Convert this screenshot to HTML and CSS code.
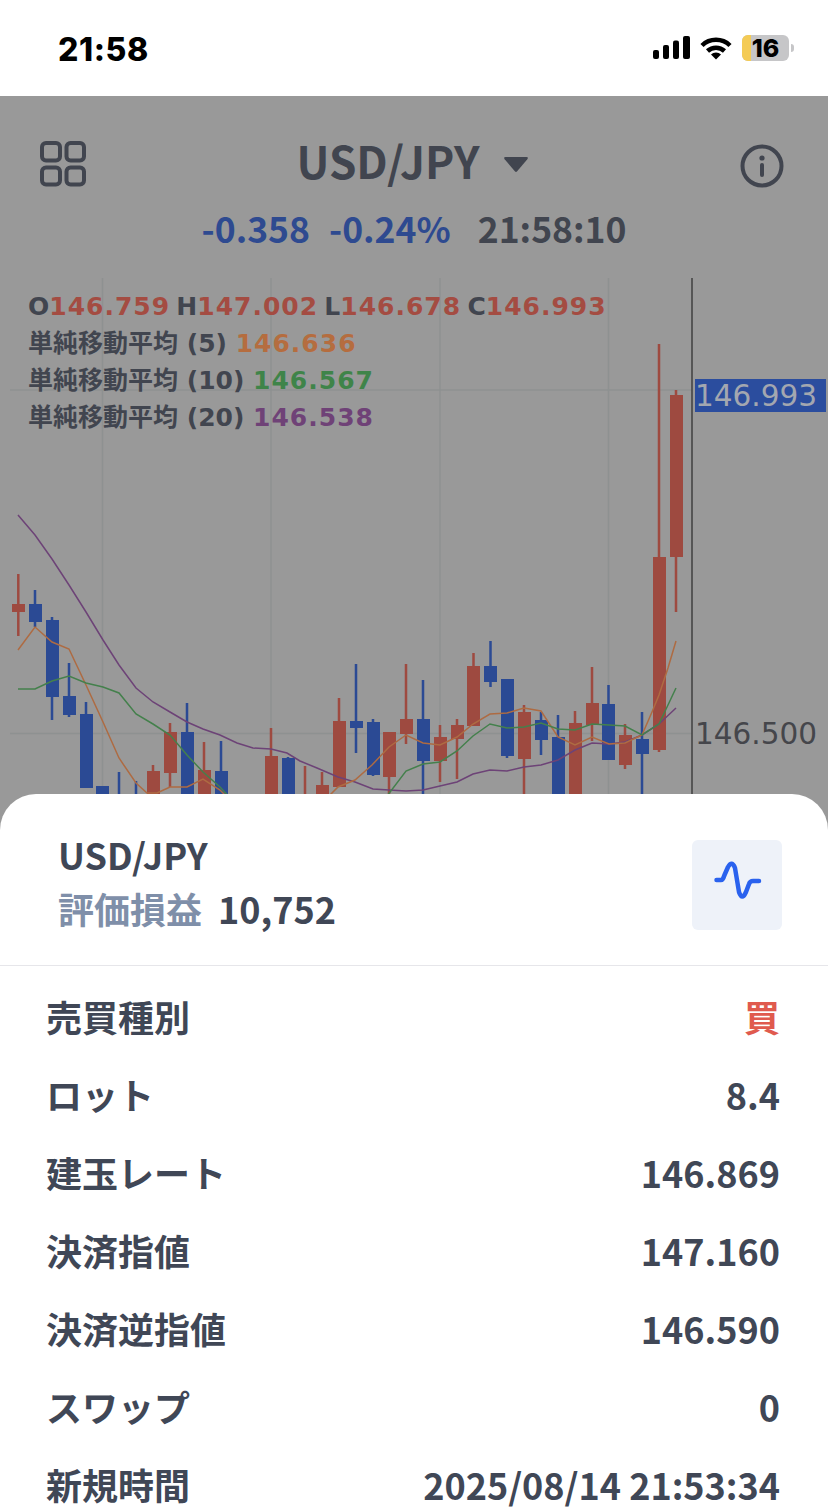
FILE: index.html
```html
<!DOCTYPE html>
<html lang="ja">

<head>
    <meta charset="UTF-8">
    <meta name="viewport" content="width=device-width, initial-scale=1.0">
    <title>USD/JPY</title>
    <link rel="stylesheet" href="styles.css">
</head>

<body>
    <div class="screen">
        <div class="status-bar">
            <span class="clock">21:58</span>
            <div class="status-icons">
                <svg class="signal" width="38" height="24" viewBox="0 0 38 24">
                    <rect x="0" y="14" width="6" height="9" rx="2" />
                    <rect x="10" y="9" width="6" height="14" rx="2" />
                    <rect x="20" y="4.500" width="6" height="18.500" rx="2" />
                    <rect x="30" y="0" width="7" height="23" rx="2" />
                </svg>
                <svg class="wifi" width="32" height="24" viewBox="0 0 32 24">
                    <path d="M2 9.500 A20 20 0 0 1 30 9.500" />
                    <path d="M7.500 15 A12.500 12.500 0 0 1 24.500 15" />
                    <path class="wifi-dot" d="M11 18.500 A7 7 0 0 1 21 18.500 L16 23.500 Z" />
                </svg>
                <div class="battery">
                    <div class="battery-fill"></div>
                    <span class="battery-level">16</span>
                </div>
                <div class="battery-nub"></div>
            </div>
        </div>

        <div class="main">
            <div class="toolbar">
                <svg class="grid-icon" width="48" height="48" viewBox="0 0 48 48">
                    <rect x="3" y="3" width="18" height="17.500" rx="4" />
                    <rect x="27.500" y="3" width="17.500" height="17.500" rx="4" />
                    <rect x="3" y="27.500" width="18" height="17" rx="4" />
                    <rect x="27.500" y="27.500" width="17.500" height="17" rx="4" />
                </svg>
                <div class="pair-select">
                    <span class="pair-name">USD/JPY</span>
                    <svg width="28" height="17" viewBox="0 0 28 18">
                        <path d="M3 1 H25 Q27.500 1 26 3.500 L15 16.500 Q14 17.500 13 16.500 L2 3.500 Q0.500 1 3 1 Z" />
                    </svg>
                </div>
                <svg class="info-icon" width="44" height="44" viewBox="0 0 44 44">
                    <circle cx="22" cy="22" r="19.500" />
                    <circle class="info-dot" cx="22" cy="14" r="2.600" />
                    <path d="M22 21 V31" />
                </svg>
            </div>

            <div class="quote">
                <span class="quote-down">-0.358</span>
                <span class="quote-down">-0.24%</span>
                <span class="quote-time">21:58:10</span>
            </div>

            <div class="chart">
                <svg class="chart-svg" width="828" height="520" viewBox="0 278 828 520">
                    <!-- grid -->
                    <path class="grid-line" d="M102.500 278 V800 M271 278 V800 M440 278 V800 M608.500 278 V800 M10 390 H692 M10 733.500 H692" />
                    <path class="axis-line" d="M692 278 V800" />

                    <!-- red candles -->
                    <path class="wick-up" d="M18.300 574 V636 M153 765 V775 M170 723 V787 M204 742 V775 M271 728 V760 M305 766 V800 M322 772 V790 M339 698 V725 M389 770 V800 M406 664 V744 M440 725 V782 M457 719 V779 M473.500 653 V670 M524 705 V800 M575 711 V730 M592 667 V741 M625 724 V769 M659 344 V752 M676 390 V612" />
                    <path class="body-up" d="M12 604 h13 v8 h-13 z M147 771 h13 v30 h-13 z M164 732 h13 v41 h-13 z M198 770 h13 v30 h-13 z M265 756 h13 v45 h-13 z M316 785 h13 v16 h-13 z M333 721 h13 v66 h-13 z M383 732 h13 v45 h-13 z M400 719 h13 v15 h-13 z M434 737 h13 v24 h-13 z M451 725 h13 v14 h-13 z M467 666 h13 v60 h-13 z M518 712 h13 v47 h-13 z M569 723 h13 v78 h-13 z M586 703 h13 v22 h-13 z M619 735 h13 v30 h-13 z M653 557 h13 v193 h-13 z M670 395 h13 v162 h-13 z" />

                    <!-- blue candles -->
                    <path class="wick-down" d="M35 590 V627 M52 617 V720 M69 663 V717 M86 702 V720 M119 772 V800 M136 781 V800 M187 703 V740 M221 741 V775 M288 757 V765 M356 664 V753 M373 719 V776 M423 680 V800 M490.500 641 V687 M507 679 V758 M541 712 V755 M558 715 V745 M608.500 685 V710 M642 712 V800" />
                    <path class="body-down" d="M29 604 h13 v18 h-13 z M46 620 h13 v77 h-13 z M63 696 h13 v19 h-13 z M80 714 h13 v74 h-13 z M96 786 h13 v15 h-13 z M181 732 h13 v69 h-13 z M215 771 h13 v30 h-13 z M282 758 h13 v43 h-13 z M350 721 h13 v7 h-13 z M367 722 h13 v53 h-13 z M417 719 h13 v42 h-13 z M484 666 h13 v16 h-13 z M501 679 h13 v77 h-13 z M535 720 h13 v20 h-13 z M552 737 h13 v64 h-13 z M602 704 h13 v56 h-13 z M636 739 h13 v15 h-13 z" />

                    <!-- moving averages -->
                    <polyline class="ma-20" points="18,515 35,535 52,559 69,585 86,612 103,640 119,665 136,688 153,702 170,712 187,722 203,729 220,735 237,743 253,748 271,749 287,753 300,761 317,768 338,777 355,782 373,789 389,790 406,791 423,790 440,786 457,782 473,774 490,770 507,771 524,767 541,765 558,760 575,750 592,743 609,744 625,742 642,735 659,724 676,708" />
                    <polyline class="ma-5" points="18,650 35,627 52,642 69,649 86,685 103,722 119,758 136,783 147,793 157,793 170,787 187,787 203,779 220,790 230,800" />
                    <polyline class="ma-5" points="325,800 338,787 355,780 372,765 389,747 406,735 423,743 440,745 457,737 473,724 490,714 507,713 524,708 541,711 558,737 575,745 592,737 609,744 625,743 642,735 652,712 659,695 668,668 676,641" />
                    <polyline class="ma-10" points="18,689 35,689 52,681 69,676 86,683 103,687 119,693 136,714 153,724 170,735 187,755 203,772 220,787 232,800" />
                    <polyline class="ma-10" points="384,800 406,771 423,764 440,762 457,751 473,736 490,724 507,728 524,727 541,723 558,729 575,730 592,724 609,725 625,726 642,735 659,724 676,688" />

                    <!-- price axis -->
                    <rect class="price-box" x="695" y="379" width="131" height="33" />
                    <text class="price-now" x="695" y="406">146.993</text>
                    <text class="price-tick" x="695" y="744">146.500</text>
                </svg>

                <div class="legend">
                    <div class="legend-row legend-ohlc">O<span class="val-ohlc">146.759</span> H<span class="val-ohlc">147.002</span> L<span class="val-ohlc">146.678</span> C<span class="val-ohlc">146.993</span></div>
                    <div class="legend-row">単純移動平均 (5) <span class="val-ma5">146.636</span></div>
                    <div class="legend-row">単純移動平均 (10) <span class="val-ma10">146.567</span></div>
                    <div class="legend-row">単純移動平均 (20) <span class="val-ma20">146.538</span></div>
                </div>
            </div>
        </div>

        <div class="sheet">
            <div class="sheet-head">
                <div class="sheet-title">
                    <div class="sheet-pair">USD/JPY</div>
                    <div class="sheet-pl"><span class="pl-label">評価損益</span><span>10,752</span></div>
                </div>
                <button class="chart-btn" type="button">
                    <svg width="90" height="90" viewBox="0 0 90 90">
                        <path d="M24.500 40 H29 Q31 40 32.500 35 L36 27 Q40 20 43 28 L47 52 Q50 61 54 52 L57 44 Q58 41 61 41 H67" />
                    </svg>
                </button>
            </div>
            <div class="detail-list">
                <div class="detail-row"><span>売買種別</span><span class="side-buy">買</span></div>
                <div class="detail-row"><span>ロット</span><span>8.4</span></div>
                <div class="detail-row"><span>建玉レート</span><span>146.869</span></div>
                <div class="detail-row"><span>決済指値</span><span>147.160</span></div>
                <div class="detail-row"><span>決済逆指値</span><span>146.590</span></div>
                <div class="detail-row"><span>スワップ</span><span>0</span></div>
                <div class="detail-row"><span>新規時間</span><span>2025/08/14 21:53:34</span></div>
            </div>
        </div>
    </div>
</body>

</html>
```

FILE: styles.css
```css
* {
    margin: 0;
    padding: 0;
    box-sizing: border-box;
}

body {
    font-family: "Noto Sans CJK JP", "Noto Sans", sans-serif;
    background: white;
    color: #404756;
}

.screen {
    position: relative;
    width: 828px;
    height: 1509px;
    overflow: hidden;
}

/* status bar */
.status-bar {
    display: flex;
    justify-content: space-between;
    align-items: center;
    height: 96px;
    padding: 0 34px 0 58px;
    background: white;
    color: black;
}

.clock {
    font-family: Inter, sans-serif;
    font-size: 32px;
    font-weight: 800;
    letter-spacing: 0.6px;
    margin-top: 2px;
}

.status-icons {
    display: flex;
    align-items: center;
}

.signal {
    margin-right: 9px;
    fill: black;
}

.wifi {
    margin-right: 10px;
    fill: none;
    stroke: black;
    stroke-width: 4.500px;
}

.wifi-dot {
    fill: black;
    stroke: none;
}

.battery {
    position: relative;
    width: 47px;
    height: 26px;
    border-radius: 6px;
    background: #c6c6c8;
    text-align: center;
}

.battery-fill {
    position: absolute;
    left: 0;
    top: 0;
    bottom: 0;
    width: 9px;
    border-radius: 6px 0 0 6px;
    background: #f4cb55;
}

.battery-level {
    position: relative;
    display: block;
    font-family: Inter, sans-serif;
    font-size: 25px;
    font-weight: 800;
    line-height: 26px;
}

.battery-nub {
    width: 3px;
    height: 8px;
    margin-left: 2px;
    border-radius: 0 3px 3px 0;
    background: #c6c6c8;
}

/* dimmed page behind the sheet */
.main {
    height: 760px;
    background: #999999;
    color: #41454f;
}

.toolbar {
    display: flex;
    justify-content: space-between;
    align-items: center;
    height: 92px;
    padding: 44px 44px 0 39px;
}

.grid-icon {
    fill: none;
    stroke: #41454f;
    stroke-width: 4px;
}

.pair-select {
    display: flex;
    align-items: center;
    gap: 23px;
    margin-bottom: 8px;
}

.pair-select svg {
    fill: #41454f;
    margin-top: 8px;
}

.pair-name {
    font-size: 44px;
    font-weight: 700;
}

.info-icon {
    margin-top: 4px;
    fill: none;
    stroke: #41454f;
    stroke-width: 4px;
    stroke-linecap: round;
}

.info-dot {
    fill: #41454f;
    stroke: none;
}

.quote {
    display: flex;
    justify-content: center;
    align-items: center;
    gap: 19px;
    height: 46px;
    margin-top: 16px;
    font-size: 35.500px;
    font-weight: 700;
}

.quote-down {
    color: #2e4a90;
}

.quote-time {
    margin-left: 8px;
}

/* chart */
.chart {
    position: relative;
    margin-top: 28px;
}

.chart-svg {
    display: block;
    fill: none;
}

.grid-line {
    stroke: #8e9191;
    stroke-width: 1.500px;
}

.axis-line {
    stroke: #414141;
    stroke-width: 1.500px;
}

.wick-up {
    stroke: #9e4a40;
    stroke-width: 2.500px;
}

.body-up {
    fill: #9e4a40;
}

.wick-down {
    stroke: #2b4a94;
    stroke-width: 2.500px;
}

.body-down {
    fill: #2b4a94;
}

.ma-5,
.ma-10,
.ma-20 {
    fill: none;
    stroke-width: 1.500px;
}

.ma-5 {
    stroke: #ae6b42;
}

.ma-10 {
    stroke: #44804c;
}

.ma-20 {
    stroke: #6d4377;
}

.price-box {
    fill: #2b4d9e;
}

.price-now,
.price-tick {
    font-family: "DejaVu Sans", sans-serif;
    font-size: 29.500px;
}

.price-now {
    fill: #a3a7b0;
}

.price-tick {
    fill: #45464b;
}

.legend {
    position: absolute;
    left: 28px;
    top: 10px;
    font-family: "DejaVu Sans", "Noto Sans CJK JP", sans-serif;
    font-size: 25px;
    font-weight: 700;
    white-space: nowrap;
}

.legend-row {
    height: 37px;
    line-height: 37px;
}

.legend-ohlc {
    word-spacing: -2.500px;
}

.val-ohlc,
.val-ma5,
.val-ma10,
.val-ma20 {
    letter-spacing: 1px;
}

.val-ohlc {
    color: #a44c42;
}

.val-ma5 {
    color: #b56d3f;
}

.val-ma10 {
    color: #3f8449;
}

.val-ma20 {
    color: #6f4277;
}

/* bottom sheet */
.sheet {
    position: absolute;
    left: 0;
    right: 0;
    top: 794px;
    bottom: 0;
    border-radius: 36px 36px 0 0;
    background: white;
}

.sheet-head {
    display: flex;
    justify-content: space-between;
    align-items: center;
    height: 172px;
    padding: 11px 46px 0 58px;
    border-bottom: 1px solid #e6e6ea;
}

.sheet-title {
    margin-bottom: 9px;
}

.sheet-pair {
    font-size: 36px;
    font-weight: 700;
    line-height: 54px;
}

.sheet-pl {
    display: flex;
    gap: 16px;
    font-size: 36px;
    font-weight: 700;
    line-height: 54px;
}

.pl-label {
    color: #7f8fa9;
}

.chart-btn {
    width: 90px;
    height: 90px;
    border: none;
    border-radius: 6px;
    background: #eef2f9;
}

.chart-btn svg {
    display: block;
    fill: none;
    stroke: #2a62ee;
    stroke-width: 4.500px;
    stroke-linecap: round;
    stroke-linejoin: round;
}

.detail-list {
    display: flex;
    flex-direction: column;
    gap: 38px;
    padding: 30px 48px 0 46px;
}

.detail-row {
    display: flex;
    justify-content: space-between;
    font-size: 36px;
    font-weight: 700;
    line-height: 40px;
}

.side-buy {
    color: #e05a4e;
}
```
